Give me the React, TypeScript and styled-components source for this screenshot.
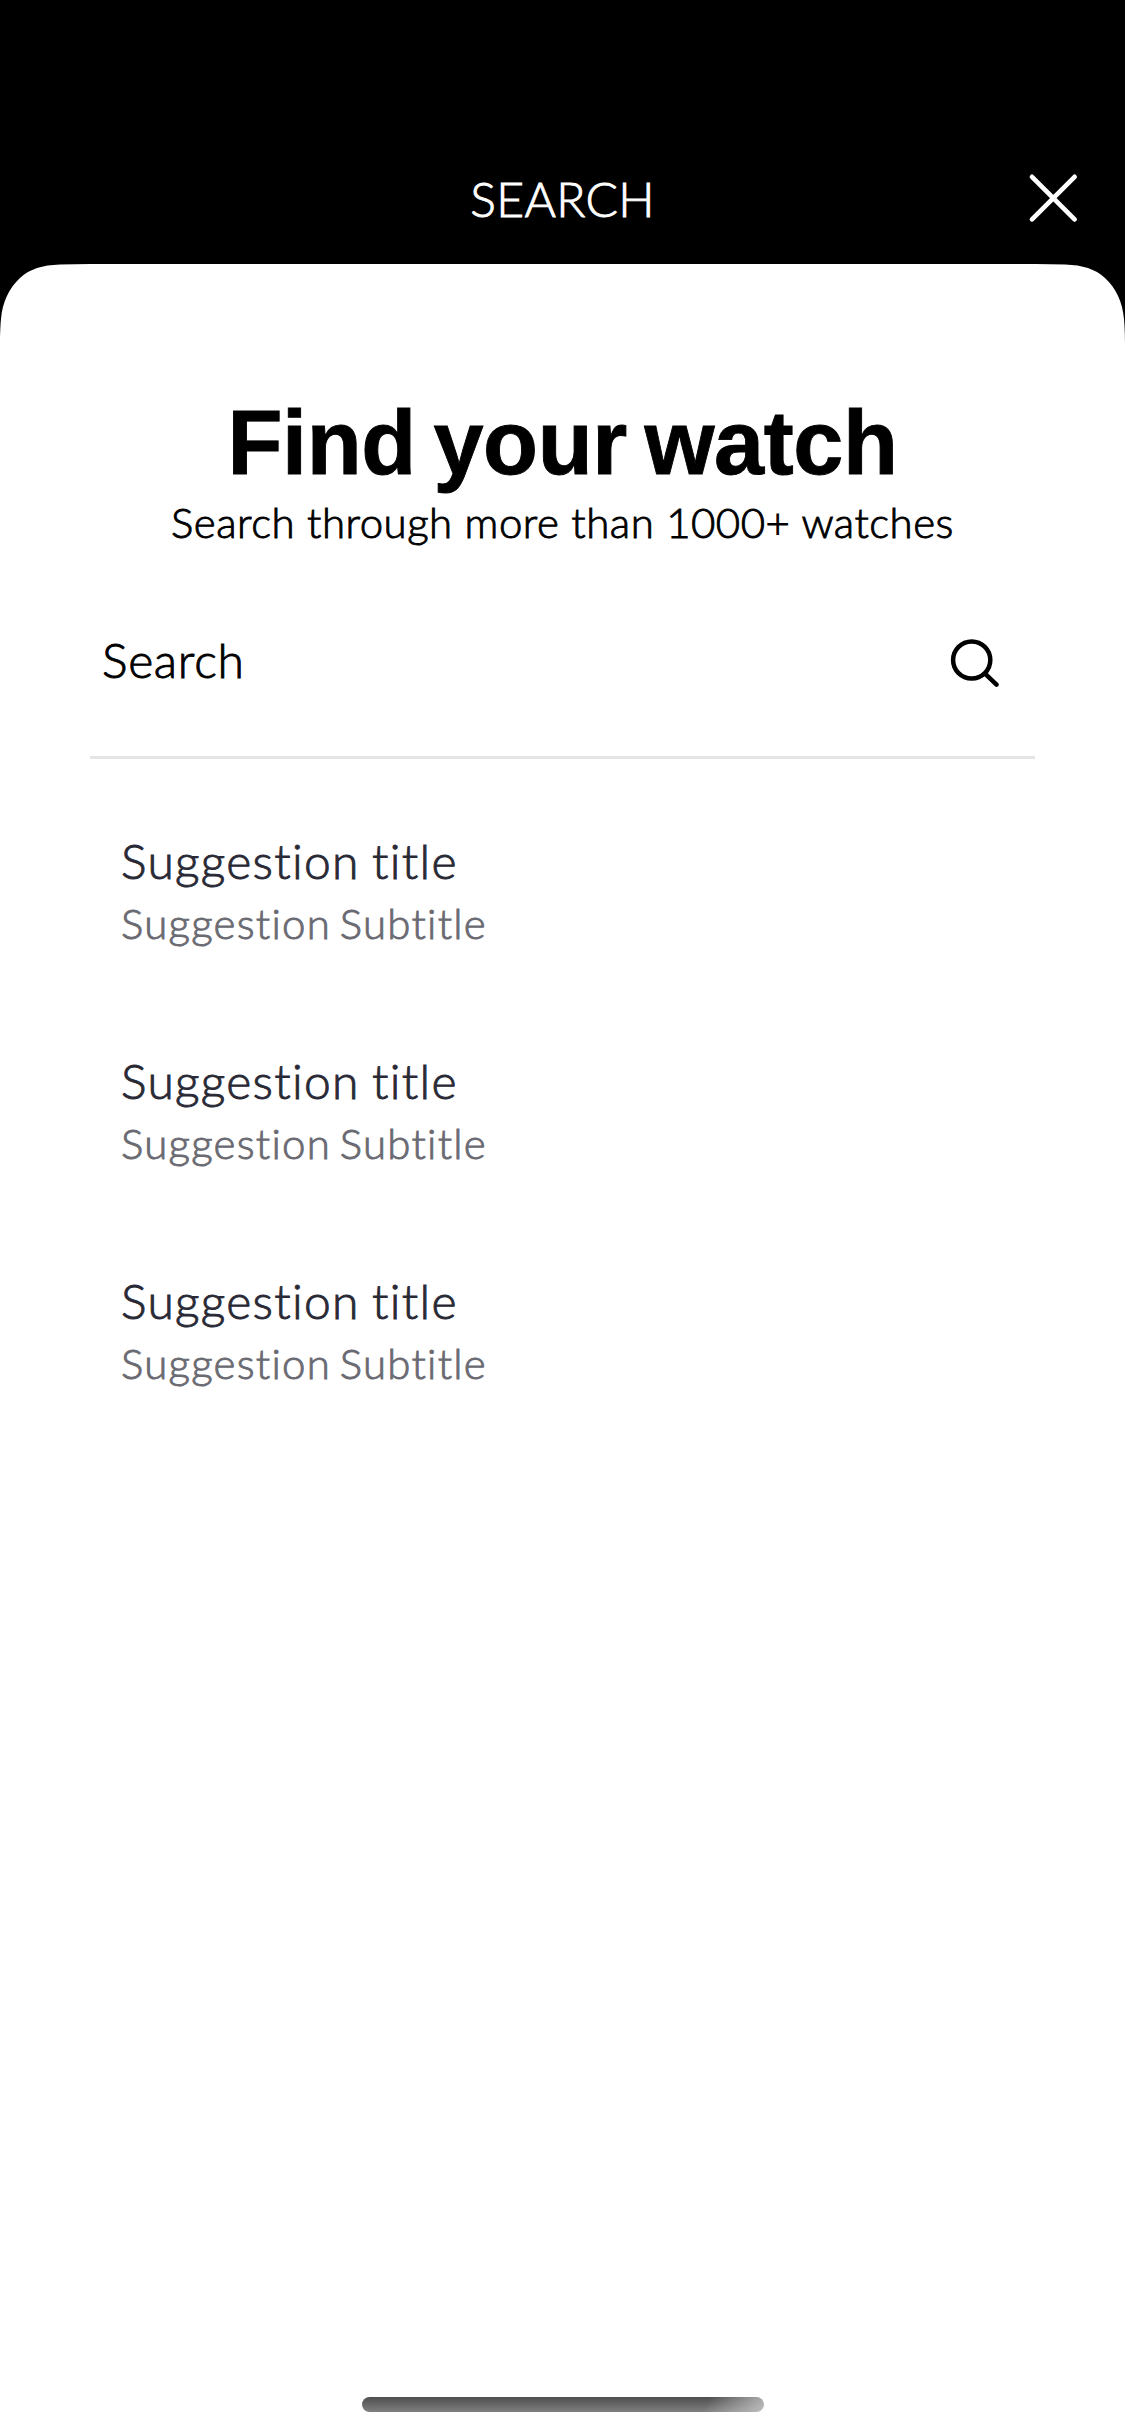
import React from "react";
import styled, { createGlobalStyle } from "styled-components";

const GlobalStyle = createGlobalStyle`
  html, body { margin: 0; background: #000; }
  * { box-sizing: border-box; }
`;

const Screen = styled.div`
  position: relative;
  display: flex;
  flex-direction: column;
  width: 1125px;
  height: 2436px;
  overflow: hidden;
  background: #000;
  color: #000;
  font-family: Lato, "Open Sans", sans-serif;
  font-weight: 300;
  -webkit-text-stroke: 0.9px currentColor;
  white-space: nowrap;
`;

const Header = styled.header`
  display: grid;
  grid-template-columns: 1fr auto 1fr;
  align-items: center;
  height: 264px;
  padding: 132px 46px 0;
  color: #fff;
`;

const HeaderTitle = styled.span`
  grid-column: 2;
  padding-top: 1px;
  font-size: 48px;
  line-height: 60px;
  letter-spacing: 0.3px;
`;

const CloseButton = styled.button`
  justify-self: end;
  width: 52px;
  height: 52px;
  padding: 0;
  border: 0;
  background: none;
  color: inherit;
  svg { display: block; }
`;

const Sheet = styled.main`
  flex: 1;
  display: flex;
  flex-direction: column;
  padding: 129px 90px 0;
  background: #fff;
  clip-path: path("M0 80C0 68 .5 60 1 55C2.5 38 9 24 20 14C30 5 42 1.3 60 .6C70 .2 80 0 90 0H1035C1045 0 1055 .2 1065 .6C1083 1.3 1095 5 1105 14C1116 24 1122.5 38 1124 55C1124.5 60 1125 68 1125 80V2172H0Z");
`;

const Heading = styled.h1`
  margin: 0;
  text-align: center;
  font: 700 90px/100px "Liberation Sans", Arial, sans-serif;
  letter-spacing: -0.4px;
  word-spacing: -7px;
`;

const Tagline = styled.p`
  margin: 4px 0 0;
  text-align: center;
  font-size: 42px;
  line-height: 50px;
  letter-spacing: 0.5px;
`;

const SearchField = styled.div`
  display: flex;
  align-items: center;
  justify-content: space-between;
  height: 212px;
  padding: 20px 36px 0 12px;
  border-bottom: 3px solid #e5e5e5;
`;

const SearchLabel = styled.span`
  margin-bottom: 3px;
  font-size: 48px;
  line-height: 60px;
  letter-spacing: 0.7px;
`;

const SearchIcon = styled.svg`
  display: block;
`;

const Suggestions = styled.ul`
  list-style: none;
  margin: 0;
  padding: 72px 30px 0 31px;
`;

const Suggestion = styled.li`
  height: 220px;
`;

const SuggestionTitle = styled.div`
  color: #292935;
  font-size: 48px;
  line-height: 60px;
  letter-spacing: 1.3px;
  word-spacing: -2px;
`;

const SuggestionSubtitle = styled.div`
  margin-top: 7px;
  color: #6a6a72;
  font-size: 42px;
  line-height: 50px;
  letter-spacing: 1.25px;
  word-spacing: -4px;
`;

const HomeIndicator = styled.div`
  position: absolute;
  left: 362px;
  top: 2397px;
  width: 402px;
  height: 15px;
  border-radius: 8px;
  background:
    linear-gradient(115deg, transparent 85%, rgba(200, 200, 200, 0.85) 100%),
    linear-gradient(#4e4e4e, #808080);
`;

const suggestions = [1, 2, 3];

export default function App() {
  return (
    <Screen>
      <GlobalStyle />
      <Header>
        <HeaderTitle>SEARCH</HeaderTitle>
        <CloseButton aria-label="Close">
          <svg width="52" height="52" viewBox="0 0 52 52" fill="none" stroke="currentColor" strokeWidth="4.7" strokeLinecap="round">
            <path d="M5 4.8L47.6 47.4M47.6 4.8L5 47.4" />
          </svg>
        </CloseButton>
      </Header>
      <Sheet>
        <Heading>Find your watch</Heading>
        <Tagline>Search through more than 1000+ watches</Tagline>
        <SearchField>
          <SearchLabel>Search</SearchLabel>
          <SearchIcon width="50" height="50" viewBox="0 0 50 50" fill="none" stroke="currentColor" strokeWidth="4.5" strokeLinecap="round">
            <circle cx="22.7" cy="23" r="18.6" />
            <path d="M36.3 36.8L47.5 47.6" />
          </SearchIcon>
        </SearchField>
        <Suggestions>
          {suggestions.map((id) => (
            <Suggestion key={id}>
              <SuggestionTitle>Suggestion title</SuggestionTitle>
              <SuggestionSubtitle>Suggestion Subtitle</SuggestionSubtitle>
            </Suggestion>
          ))}
        </Suggestions>
      </Sheet>
      <HomeIndicator />
    </Screen>
  );
}
